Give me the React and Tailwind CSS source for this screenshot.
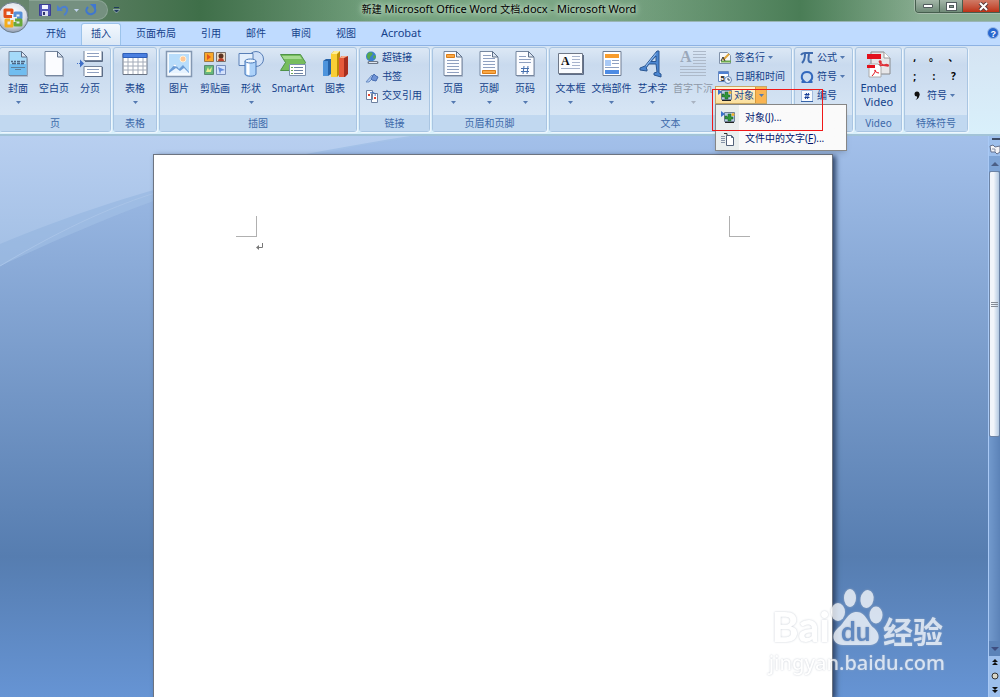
import React, { useState } from "react";

const TABS = ["开始", "插入", "页面布局", "引用", "邮件", "审阅", "视图", "Acrobat"];

const PUNCTUATION = [",", "。", "、", ";", ":", "?"];

function Icon({ children, size = 28 }) {
  return (
    <svg width={size} height={size} viewBox={`0 0 ${size} ${size}`} className="shrink-0 overflow-visible" aria-hidden="true">
      {children}
    </svg>
  );
}

function Sheet({ fill = "#fbfcff", children }) {
  return (
    <Icon>
      <path d="M6 3h12l6 6v18H6z" fill="#8b98ad" opacity=".5" />
      <path d="M5 1.500h12.500l5.500 5.500v18.500H5z" fill={fill} stroke="#75869f" />
      <path d="M17.500 1.500v5.500H23z" fill="#dfe7f3" stroke="#5f7089" />
      {children}
    </Icon>
  );
}

function Lines({ x, y, w, n, step = 3, color = "#8fa0c0" }) {
  return Array.from({ length: n }, (_, i) => (
    <path key={i} d={`M${x} ${y + i * step}.5h${w}`} stroke={color} />
  ));
}

const CoverIcon = () => (
  <Sheet fill="#a5daf9">
    <path d="M5.500 14h17v11h-17z" fill="#70bdf0" />
    <path d="M7 11.500h2m1 0h2m1 0h3m1 0h4M8 13.500h4m1 0h3m1 0h3" stroke="#4d6584" strokeWidth="1.500" />
    <path d="M7 17.500h14M11 19.500h6" stroke="#5f7f9b" />
  </Sheet>
);

const BreakIcon = () => (
  <Icon>
    <path d="M8 1v9.500h18V1M8 26V16.500h18V26" fill="#fff" stroke="#71819a" />
    <path d="M9 11.500h17.500V2M9 26.500h17.500V17" fill="none" stroke="#5c6d87" />
    <Lines x={11} y={3} w={12} n={2} />
    <Lines x={11} y={19} w={12} n={2} />
    <path d="M4 9.500l4 4-4 4z" fill="#3f6fc8" />
    <path d="M1 13.500h3" stroke="#3f6fc8" strokeDasharray="1 1" />
  </Icon>
);

const TableIcon = () => (
  <Icon>
    <path d="M2 3.500h24v21H2z" fill="#fff" stroke="#6a7484" />
    <path d="M2 3.500h24v4H2z" fill="#4a7fe0" stroke="#2e5fba" />
    <path d="M2 12h24M2 16h24M2 20h24M7 8v16M12 8v16M17 8v16M22 8v16" stroke="#a3abb9" />
  </Icon>
);

const PictureIcon = () => (
  <Icon>
    <path d="M1.500 1.500h25v25h-25z" fill="#f4faff" stroke="#8498b2" strokeWidth="1.500" />
    <path d="M4 4h20v19H4z" fill="#b9ddfb" />
    <circle cx="18" cy="9" r="3" fill="#ffc795" stroke="#fff1d8" />
    <path d="M4 21l6-7 4 5 4-4 6 7v1H4z" fill="#6b9cd6" />
    <path d="M4 23l7-5 4 3 4-3 5 5z" fill="#e7f3ff" />
    <path d="M8 16l2-2 2 2.500z" fill="#fff" />
  </Icon>
);

const ClipArtIcon = () => (
  <Icon>
    <path d="M3.500 2.500h9v9h-9z" fill="#f8a92b" stroke="#9b7747" />
    <path d="M6 4l4 3-4 3z" fill="#e5561b" />
    <path d="M15.500 2.500h9v9h-9z" fill="#ead8c3" stroke="#776f6b" />
    <circle cx="20" cy="6" r="2.500" fill="#5b3422" />
    <path d="M17 11c0-4 6-4 6 0z" fill="#bd432b" />
    <path d="M3.500 15.500h9v9h-9z" fill="#65b87a" stroke="#5c8a74" />
    <path d="M5 22l2-5 1 3 3-3-1 5z" fill="#e7ef91" />
    <path d="M15.500 15.500h9v9h-9z" fill="#d4e2fb" stroke="#7990bd" />
    <path d="M17 17l7 3-4 1-1 3z" fill="#648dde" />
  </Icon>
);

const ShapesIcon = () => (
  <Icon>
    <circle cx="19" cy="9" r="7.500" fill="#cfe0f7" stroke="#587fb7" />
    <path d="M2 3.500h14v12H2z" fill="#e3effc" stroke="#587fb7" />
    <path d="M8 11v13c0 3 11 3 11 0V11" fill="#acd2fa" stroke="#4777b8" />
    <path d="M9.500 12v12c1 1 2 1 3 1V12z" fill="#fff" />
    <ellipse cx="13.500" cy="11" rx="5.500" ry="2" fill="#f0f8ff" stroke="#4777b8" />
  </Icon>
);

const SmartArtIcon = () => (
  <Icon>
    <path d="M1.500 4.500h20l5 8-5 8h-20l5-8z" fill="#76bd5d" stroke="#4f9348" />
    <path d="M3 6h18l2 3H5z" fill="#a6da91" />
    <path d="M10.500 14.500h16v11h-16z" fill="#fff" stroke="#7c91ad" />
    <Lines x={15} y={17} w={9} n={3} color="#6c83a5" />
    <path d="M12 17.500h2m-2 3h2m-2 3h2" stroke="#6ba858" />
  </Icon>
);

const ChartIcon = () => (
  <Icon>
    <path d="M2 11l3-2h5v15l-3 2H2z" fill="#2663a9" />
    <path d="M2 11h5v15H2z" fill="#4e94dc" />
    <path d="M10 4l3-3h6v23l-3 3h-6z" fill="#bd8d07" />
    <path d="M10 4h6v23h-6z" fill="#f9cf35" />
    <path d="M10 4l3-3h6l-3 3z" fill="#ffed91" />
    <path d="M18 8l3-2h6v18l-3 3h-6z" fill="#a62e1e" />
    <path d="M18 8h5v19h-5z" fill="#e65a3b" />
    <path d="M18 8l3-2h6l-4 2z" fill="#f8ab8a" />
  </Icon>
);

const HeaderIcon = () => (
  <Sheet>
    <path d="M7.500 4.500h8v3h-8z" fill="#f8a847" stroke="#dc7d17" />
    <Lines x={8} y={10} w={12} n={5} />
  </Sheet>
);

const FooterIcon = () => (
  <Sheet>
    <Lines x={8} y={5} w={8} n={1} />
    <Lines x={8} y={8} w={12} n={4} />
    <path d="M7.500 20.500h13v3h-13z" fill="#f8a847" stroke="#dc7d17" />
  </Sheet>
);

const PageNumberIcon = () => (
  <Sheet>
    <Lines x={8} y={6} w={7} n={1} />
    <Lines x={8} y={9} w={12} n={2} />
    <path d="M13 16l-1 8M17 16l-1 8M10 18.500h8M10 21.500h8" stroke="#4770ae" />
  </Sheet>
);

const TextBoxIcon = () => (
  <Icon>
    <path d="M1.500 3.500h24v20h-24z" fill="#fafcff" stroke="#6e7787" />
    <path d="M2 24.500h24.500V5" fill="none" stroke="#5d6d88" />
    <text x="4" y="15" fontSize="12" fontWeight="700" fontFamily="Liberation Serif, serif" fill="#111">A</text>
    <Lines x={15} y={6} w={8} n={4} color="#a6b3cd" />
    <Lines x={4} y={18} w={19} n={1} color="#a6b3cd" />
  </Icon>
);

const PartsIcon = () => (
  <Icon>
    <path d="M5 1.500h18v24H5z" fill="#fff" stroke="#6e7d94" />
    <path d="M7 4h14v4H7z" fill="#f89c2c" />
    <path d="M7 10h6v6H7z" fill="#a9c9f5" />
    <Lines x={14} y={10} w={7} n={2} />
    <Lines x={7} y={17} w={14} n={1} />
    <path d="M7 20h14v4H7z" fill="#4d8be4" />
  </Icon>
);

const WordArtIcon = () => (
  <Icon>
    <path d="M18 1L6 16l-5 2v2l7 1v-2l-1-1 3-4h7l1 8-3 1v2l7 2v-3l-2-1L20 1zM12 11.500L17 6v5.500z" fill="#4b86d1" stroke="#2b5792" />
    <path d="M17 3.500L7 16" stroke="#9ac2f1" />
  </Icon>
);

const DropCapIcon = () => (
  <Icon>
    <text x="1" y="12" fontSize="16" fontWeight="700" fontFamily="Liberation Serif, serif" fill="#9ba8ba">A</text>
    <Lines x={14} y={1} w={13} n={5} color="#adb9c9" />
    <Lines x={1} y={16} w={26} n={4} color="#adb9c9" />
  </Icon>
);

const PdfIcon = () => (
  <Icon>
    <path d="M6 2h13l6 6v16H6z" fill="#e7e7e9" stroke="#88898c" />
    <path d="M19 2v6h6" fill="#fff" stroke="#999" />
    <path d="M2 4h14v5H2z" fill="#e3101c" />
    <path d="M13 17c3-3 4-6 2-6s1 5 8 5c2-2-5-2-10 1z" fill="none" stroke="#df3137" strokeWidth="1.500" />
    <path d="M4 14h9l3 3v10H4z" fill="#fff" stroke="#aaa" />
    <path d="M2 15h8v3H2z" fill="#e3101c" />
    <path d="M7 26c3-3 4-6 3-6s1 3 4 3" fill="none" stroke="#e3101c" />
  </Icon>
);

const LinkIcon = () => (
  <Icon size={14}>
    <circle cx="6" cy="5.500" r="5" fill="#3c80cf" />
    <path d="M3 2c3-2 6 0 4 2S4 7 5 9C2 8 1 5 3 2zM9 4l2 1-1 3-2-1z" fill="#57a94c" />
    <path d="M4 11.500h4M8 11.500h4" stroke="#6d7889" strokeWidth="3" strokeLinecap="round" />
    <path d="M4 11.500h8" stroke="#dfe6ee" />
  </Icon>
);

const BookmarkIcon = () => (
  <Icon size={14}>
    <path d="M1 12l6-7 2 2-5 5z" fill="#a8c3ed" stroke="#6d8fc4" />
    <path d="M6 9l3-5 2 2 2 1-2 4-4-1z" fill="#6f93d6" stroke="#456bb0" />
  </Icon>
);

const CrossRefIcon = () => (
  <Icon size={14}>
    <path d="M1.500 1.500h6v9h-6zM6.500 4.500h6v9h-6z" fill="#fff" stroke="#6e81a0" />
    <path d="M3 5h2v2H3zM9 8h2v2H9z" fill="#e4412c" />
    <path d="M5 4c4-2 6 1 5 3" fill="none" stroke="#356bc1" />
  </Icon>
);

const SignatureIcon = () => (
  <Icon size={14}>
    <path d="M1.500 1.500h8l3 3v8h-11z" fill="#f7f8fb" stroke="#8091a9" />
    <path d="M3 10.500h10" stroke="#6aa84a" strokeWidth="2" />
    <path d="M5 9l6-6" stroke="#e0a63c" strokeWidth="2" />
    <path d="M3 10l2-4 2 4" fill="none" stroke="#333" />
  </Icon>
);

const DateIcon = () => (
  <Icon size={14}>
    <path d="M.5 1.500h10v10H.5z" fill="#fff" stroke="#6588c1" />
    <path d="M1 2h9v2H1z" fill="#4f80d2" />
    <text x="2.500" y="10.500" fontSize="8" fontWeight="700" fontFamily="Liberation Sans, sans-serif" fill="#222">5</text>
    <circle cx="10" cy="10" r="3.500" fill="#eef5ff" stroke="#6787b5" />
    <path d="M10 8v2h2" fill="none" stroke="#345" />
  </Icon>
);

const ObjectIcon = () => (
  <Icon size={14}>
    <path d="M3.500 2.500h10v9h-10z" fill="#b7cce3" stroke="#6e8196" />
    <path d="M0 1l4 3-4 3z" fill="#3c72cc" />
    <path d="M7 11V9H4V6h2v1h1V4h3v3h2v2h-2v2z" fill="#2f9639" stroke="#1d5d28" strokeWidth=".5" />
    <circle cx="12" cy="4.500" r="1.500" fill="#f1b32e" />
    <path d="M4 12.500h9" stroke="#222" />
  </Icon>
);

const FileTextIcon = () => (
  <Icon size={14}>
    <path d="M0 4.500h4M0 6.500h4M0 8.500h4M0 10.500h4" stroke="#8794a8" />
    <path d="M3 1.500h3v2" fill="none" stroke="#333" />
    <path d="M5.500 3.500h5l2 2v8h-7z" fill="#fff" stroke="#53627a" />
    <path d="M10.500 3.500v2h2" fill="none" stroke="#53627a" />
  </Icon>
);

const NumberIcon = () => (
  <Icon size={14}>
    <path d="M1.500 1.500h11v11h-11z" fill="#f7faff" stroke="#a3bbdf" />
    <path d="M1 12.500h12" stroke="#3764a8" />
    <path d="M6.500 4l-1 6M8.500 4l-1 6M4.500 5.500h5M4.500 8.500h5" stroke="#173e99" />
  </Icon>
);

const PiIcon = () => (
  <Icon size={14}>
    <path d="M1 4c1-2 2-2 4-2h8M5 3c0 4-1 7-3 9M9 3c-1 6-1 9 3 8" fill="none" stroke="#3d69ad" strokeWidth="2" />
  </Icon>
);

const OmegaIcon = () => (
  <Icon size={14}>
    <path d="M1.500 12H5c-5-3-4-10 2-10s7 7 2 10h3.500" fill="none" stroke="#3268bd" strokeWidth="2" />
  </Icon>
);

const CommaIcon = () => (
  <Icon size={14}>
    <circle cx="7" cy="5" r="2.500" fill="#111" />
    <path d="M9.500 5c0 3-1 5-4 6 2-2 2-3 1-5z" fill="#111" />
  </Icon>
);

function Caret({ muted }) {
  return (
    <svg width="5" height="3" viewBox="0 0 5 3" className="shrink-0" aria-hidden="true">
      <path d="M0 0h5L2.500 3z" fill={muted ? "#a9b3c1" : "#5479b1"} />
    </svg>
  );
}

function BigButton({ icon, label, width = "w-9", menu, muted }) {
  return (
    <button
      type="button"
      disabled={muted}
      className={`flex flex-col items-center gap-[6px] pt-[2px] leading-[14px] whitespace-nowrap ${width} ${muted ? "text-[#8d97a6]" : "text-[#15428b]"}`}
    >
      <span className="flex flex-col items-center gap-[3px]">
        {icon}
        <span>{label}</span>
      </span>
      {menu && <Caret muted={muted} />}
    </button>
  );
}

function SmallButton({ icon, label, menu }) {
  return (
    <button type="button" className="flex h-[19px] items-center gap-[3px] whitespace-nowrap">
      {icon}
      <span>{label}</span>
      {menu && <Caret />}
    </button>
  );
}

function Group({ title, width, pad = "", children }) {
  return (
    <section
      aria-label={title}
      className={`flex shrink-0 flex-col rounded-[3px] border border-[#a9c5e2] bg-linear-to-b from-[#dce8f5] from-0% via-[#c9daee] via-20% to-[#dbe9f7] shadow-[1px_1px_0_#eef6fd] ${width}`}
    >
      <div className={`flex min-h-0 flex-1 ${pad}`}>{children}</div>
      <h2 className="h-4 shrink-0 bg-[#c1d8f0] text-center leading-4 text-[#3e6aaa]">{title}</h2>
    </section>
  );
}

function TitleBar() {
  return (
    <header className="relative flex h-[22px] shrink-0 justify-between border-b border-[#9ab5b5] bg-linear-to-r from-[#6b8a74] via-[#74a37f] via-38% to-[#8aad92]">
      <div className="absolute inset-0 bg-linear-to-r from-[#6d8873] from-0% via-[#3f6f49] via-20% to-transparent to-38%" />
      <div className="absolute inset-0 bg-linear-to-r from-transparent from-60% via-[#4a7d56] via-80% to-transparent to-92%" />
      <div className="relative ml-[29px] flex h-5 w-[79px] items-center gap-[6px] rounded-r-full border border-l-0 border-[#8aa394] bg-[#759080] pl-[10px]">
        <button type="button" aria-label="保存">
          <svg width="12" height="12" viewBox="0 0 12 12">
            <path d="M.5.500h11v11H.500z" fill="#5458b8" stroke="#3a3d94" />
            <path d="M3 1h6v4H3z" fill="#f3f5ff" />
            <path d="M3 7h6v5H3z" fill="#dce0f1" />
            <path d="M4 8h2v3H4z" fill="#31346f" />
          </svg>
        </button>
        <button type="button" aria-label="撤消" className="flex items-center gap-[5px]">
          <svg width="12" height="12" viewBox="0 0 12 12">
            <path d="M3 5c4-4 8-2 7 2-.5 2-1 3-3 4" fill="none" stroke="#4c7fcf" strokeWidth="2" />
            <path d="M0 1v6h6z" fill="#4c7fcf" />
          </svg>
          <svg width="5" height="3" viewBox="0 0 5 3"><path d="M0 0h5L2.500 3z" fill="#c0d3ee" /></svg>
        </button>
        <button type="button" aria-label="重复">
          <svg width="12" height="12" viewBox="0 0 12 12">
            <path d="M3 3c-4 4 0 8 4 7s4-5 2-7" fill="none" stroke="#3f77d0" strokeWidth="2" />
            <path d="M5 0h6v6z" fill="#3f77d0" />
          </svg>
        </button>
      </div>
      <button type="button" aria-label="自定义快速访问工具栏" className="relative ml-[5px] h-5">
        <svg width="7" height="7" viewBox="0 0 7 7">
          <path d="M1 .500h5" stroke="#203c5c" />
          <path d="M0 2.500h7L3.500 6z" fill="#203c5c" stroke="#dce9f5" strokeWidth=".5" />
        </svg>
      </button>
      <h1 className="relative flex-1 text-center text-[11px] leading-[18px] text-black [text-shadow:0_0_5px_#d7ead9,0_0_7px_#d7ead9]">
        <span className="text-[10px]">新建</span> Microsoft Office Word <span className="text-[10px]">文档</span>.docx - Microsoft Word
      </h1>
      <div className="relative ml-[37px] flex h-[13px] overflow-hidden rounded-bl-[4px] border border-t-0 border-[#465e4e] shadow-[0_0_0_1px_#a5bbaa]">
        <button type="button" aria-label="最小化" className="flex w-6 items-center justify-center border-r border-[#465e4e] bg-linear-to-b from-[#a3b6a8] to-[#708b78]">
          <svg width="12" height="6" viewBox="0 0 12 6"><path d="M1.500 1.500h9v3h-9z" fill="#fff" stroke="#515b5d" /></svg>
        </button>
        <button type="button" aria-label="最大化" className="flex w-[23px] items-center justify-center border-r border-[#465e4e] bg-linear-to-b from-[#a3b6a8] to-[#708b78]">
          <svg width="11" height="9" viewBox="0 0 11 9"><path d="M2 2h7v5H2z" fill="none" stroke="#515b5d" strokeWidth="4" /><path d="M2 2h7v5H2z" fill="none" stroke="#fff" strokeWidth="2" /></svg>
        </button>
        <button type="button" aria-label="关闭" className="flex w-9 items-center justify-center bg-linear-to-b from-[#cf7a66] to-[#bd3013] pl-1">
          <svg width="11" height="9" viewBox="0 0 11 9"><path d="M2 1l7 7M9 1L2 8" stroke="#593a3a" strokeWidth="4" /><path d="M2 1l7 7M9 1L2 8" stroke="#fff" strokeWidth="2" /></svg>
        </button>
      </div>
    </header>
  );
}

function OfficeButton() {
  return (
    <button type="button" aria-label="Office 按钮" className="absolute top-[1px] -left-[3px] z-10">
      <svg width="32" height="33" viewBox="0 0 32 33">
        <defs>
          <radialGradient id="orb" cx=".5" cy=".35" r=".65">
            <stop offset="0" stopColor="#fff" />
            <stop offset=".65" stopColor="#dbe0e9" />
            <stop offset="1" stopColor="#8f9bb0" />
          </radialGradient>
        </defs>
        <circle cx="16" cy="16.500" r="15" fill="url(#orb)" stroke="#6b7c8a" />
        <g fill="none" strokeWidth="3" strokeLinejoin="round">
          <path d="M15 15.500H8V9h7v4" stroke="#e2501b" />
          <path d="M18 16v-4h6v5h-4" stroke="#5791d9" />
          <path d="M15 19v6H9v-6h4" stroke="#f4ac1c" />
          <path d="M18 19h6v5h-6v-3" stroke="#68a83a" />
        </g>
      </svg>
    </button>
  );
}

function ObjectMenu() {
  return (
    <ul role="menu" className="absolute top-full -left-px z-20 mt-px w-[132px] border border-[#868686] bg-linear-to-r from-[#e9eeee] from-[23px] to-[#fafafa] to-[23px] py-px text-[#00156e] shadow-md">
      <li role="none">
        <button type="button" role="menuitem" className="flex h-[22px] w-full items-center gap-[10px] pl-[5px]">
          <ObjectIcon />
          <span>对象(<u>J</u>)...</span>
        </button>
      </li>
      <li role="none">
        <button type="button" role="menuitem" className="flex h-[21px] w-full items-center gap-[10px] pl-[5px]">
          <FileTextIcon />
          <span>文件中的文字(<u>F</u>)...</span>
        </button>
      </li>
    </ul>
  );
}

function Ribbon() {
  const [menuOpen, setMenuOpen] = useState(true);

  return (
    <div className="-ml-px flex h-[91px] shrink-0 gap-[2px] border-t border-b-2 border-t-[#8db2e3] border-b-[#a3c4d8] bg-linear-to-b from-[#d5e4f3] to-[#d9f0fb] pt-px pb-[2px]">
      <Group title="页" width="w-28">
        <BigButton icon={<CoverIcon />} label="封面" menu />
        <BigButton icon={<Sheet />} label="空白页" />
        <BigButton icon={<BreakIcon />} label="分页" />
      </Group>
      <Group title="表格" width="w-11" pad="justify-center">
        <BigButton icon={<TableIcon />} label="表格" menu />
      </Group>
      <Group title="插图" width="w-[198px]" pad="pl-px">
        <BigButton icon={<PictureIcon />} label="图片" />
        <BigButton icon={<ClipArtIcon />} label="剪贴画" />
        <BigButton icon={<ShapesIcon />} label="形状" menu />
        <BigButton icon={<SmartArtIcon />} label="SmartArt" width="w-12" />
        <BigButton icon={<ChartIcon />} label="图表" />
      </Group>
      <Group title="链接" width="w-[71px]" pad="flex-col items-start pl-[5px]">
        <SmallButton icon={<LinkIcon />} label="超链接" />
        <SmallButton icon={<BookmarkIcon />} label="书签" />
        <SmallButton icon={<CrossRefIcon />} label="交叉引用" />
      </Group>
      <Group title="页眉和页脚" width="w-[115px]" pad="pl-[2px]">
        <BigButton icon={<HeaderIcon />} label="页眉" menu />
        <BigButton icon={<FooterIcon />} label="页脚" menu />
        <BigButton icon={<PageNumberIcon />} label="页码" menu />
      </Group>
      <Group title="文本" width="w-[243px]">
        <BigButton icon={<TextBoxIcon />} label="文本框" width="w-[41px]" menu />
        <BigButton icon={<PartsIcon />} label="文档部件" width="w-[41px]" menu />
        <BigButton icon={<WordArtIcon />} label="艺术字" width="w-[41px]" menu />
        <BigButton icon={<DropCapIcon />} label="首字下沉" width="w-10" menu muted />
        <div className="flex flex-col items-start">
          <div className="pl-[5px]">
            <SmallButton icon={<SignatureIcon />} label="签名行" menu />
            <SmallButton icon={<DateIcon />} label="日期和时间" />
          </div>
          <div className="relative ml-[2px] flex h-[18px] border border-[#c7a763] bg-linear-to-b from-[#fdf3d5] to-[#fbdf9b]">
            <button type="button" className="flex items-center gap-[2px] pl-[2px]">
              <ObjectIcon />
              <span>对象</span>
            </button>
            <button
              type="button"
              aria-label="对象菜单"
              aria-expanded={menuOpen}
              onClick={() => setMenuOpen(!menuOpen)}
              className="ml-px flex w-[11px] items-center justify-center border-l border-[#d99a3a] bg-[#f9b452]"
            >
              <Caret />
            </button>
            {menuOpen && <ObjectMenu />}
            <div className="pointer-events-none absolute top-[2px] -left-1 z-30 h-[42px] w-[111px] border border-[#f01818]" />
          </div>
        </div>
      </Group>
      <Group title="符号" width="w-[59px]" pad="flex-col items-start pl-[5px]">
        <SmallButton icon={<PiIcon />} label="公式" menu />
        <SmallButton icon={<OmegaIcon />} label="符号" menu />
        <SmallButton icon={<NumberIcon />} label="编号" />
      </Group>
      <Group title="Video" width="w-[47px]" pad="justify-center">
        <BigButton icon={<PdfIcon />} label={<span className="text-[11px]">Embed<br />Video</span>} />
      </Group>
      <Group title="特殊符号" width="w-16" pad="flex-col">
        <div className="grid h-[38px] grid-cols-3 pr-1 text-black">
          {PUNCTUATION.map((mark) => (
            <button key={mark} type="button" className="leading-[19px] font-bold">{mark}</button>
          ))}
        </div>
        <div className="pl-[5px]">
          <SmallButton icon={<CommaIcon />} label="符号" menu />
        </div>
      </Group>
    </div>
  );
}

function Scrollbar() {
  return (
    <aside className="relative flex w-3 shrink-0 flex-col border-l border-[#a9c9f5] bg-[#9dbfec]">
      <div className="flex h-5 flex-col items-end gap-1 pt-[2px]">
        <div className="h-[2px] w-2 bg-[#3d4c66]" />
        <svg width="11" height="11" viewBox="0 0 11 11">
          <path d="M1 2l3-1 2 2 5-1v6L8 10 6 8H2z" fill="#f4f4f7" stroke="#64718c" />
          <path d="M3 5h3v3" fill="none" stroke="#8790a5" />
        </svg>
      </div>
      <button type="button" aria-label="向上滚动" className="flex h-[15px] items-center justify-center bg-[#7ea4d6]">
        <svg width="8" height="4" viewBox="0 0 8 4"><path d="M0 4l4-4 4 4z" fill="#4b5f86" /></svg>
      </button>
      <div className="flex flex-1 flex-col bg-linear-to-r from-[#7299cc] to-[#5c83b8]">
        <div className="flex h-[266px] flex-col items-center justify-center gap-px rounded-[2px] border border-[#6c83a5] bg-linear-to-r from-[#f2f5fa] from-40% to-[#b3c9e2]">
          <i className="h-px w-[7px] bg-[#848b96]" />
          <i className="h-px w-[7px] bg-[#848b96]" />
          <i className="h-px w-[7px] bg-[#848b96]" />
        </div>
      </div>
      <button type="button" aria-label="向下滚动" className="flex h-[15px] items-center justify-center bg-[#5c83b8]">
        <svg width="8" height="4" viewBox="0 0 8 4"><path d="M0 0h8L4 4z" fill="#3e4e80" /></svg>
      </button>
      <div className="flex h-[41px] flex-col items-center justify-around">
        <button type="button" aria-label="前一页">
          <svg width="6" height="7" viewBox="0 0 6 7"><path d="M3 0l3 3H0zM3 3l3 3H0z" fill="#111" /></svg>
        </button>
        <button type="button" aria-label="选择浏览对象">
          <svg width="8" height="8" viewBox="0 0 8 8"><circle cx="4" cy="4" r="3" fill="#d8d5c8" stroke="#333" /></svg>
        </button>
        <button type="button" aria-label="下一页">
          <svg width="6" height="7" viewBox="0 0 6 7"><path d="M0 0h6L3 3zM0 3h6L3 6z" fill="#111" /></svg>
        </button>
      </div>
    </aside>
  );
}

function Watermark() {
  return (
    <div className="pointer-events-none absolute right-[55px] bottom-[21px] flex flex-col items-end text-white opacity-75 [text-shadow:0_0_2px_#a9b2bf]">
      <div className="flex items-end pr-[2px]">
        <span className="mb-[5px] font-['Lato'] text-[41px] leading-[36px] font-black">Bai</span>
        <svg width="53" height="58" viewBox="0 0 53 58" fill="#fff" className="mb-[4px] drop-shadow-[0_0_1px_#a9b2bf]">
          <ellipse cx="8" cy="24" rx="7" ry="9" />
          <ellipse cx="20" cy="10" rx="6" ry="9" />
          <ellipse cx="37" cy="11" rx="6.500" ry="9" transform="rotate(10 37 11)" />
          <ellipse cx="46" cy="27" rx="6.500" ry="8.500" />
          <path d="M27 24c9 0 11 12 17 16 8 7 5 17-4 17H13c-10 0-13-10-5-17 7-5 9-16 19-16z" />
          <text x="11" y="53" fontSize="26" fontWeight="700" fontFamily="Lato, sans-serif" fill="#6389bf">du</text>
        </svg>
        <span className="text-[30px] leading-[36px] font-bold">经验</span>
      </div>
      <span className="text-[20px] leading-[26px] font-medium">jingyan.baidu.com</span>
    </div>
  );
}

function Workspace() {
  return (
    <main className="relative flex min-h-0 flex-1 overflow-hidden bg-linear-to-b from-[#a3c0ea] from-0% via-[#567db0] via-75% to-[#6694d4]">
      <svg className="absolute top-0 left-0" width="430" height="140" viewBox="0 0 430 140" aria-hidden="true">
        <defs>
          <linearGradient id="sky" x1="0" y1="0" x2="0" y2="1">
            <stop offset="0" stopColor="#b8cff0" />
            <stop offset="1" stopColor="#a5c1e6" />
          </linearGradient>
        </defs>
        <path d="M0 0h425C260 22 150 60 0 130z" fill="#a5c3e8" opacity=".5" />
        <path d="M0 0h410C250 25 130 54 0 108z" fill="url(#sky)" />
        <path d="M0 130C70 88 120 68 155 57" fill="none" stroke="#a9c4e8" />
      </svg>
      <div className="relative min-w-0 flex-1 overflow-hidden pt-[18px] pr-[2px]">
        <article className="mx-auto h-full w-full max-w-[680px] border border-b-0 border-[#6d7480] bg-white px-[82px] pt-[61px] shadow-[3px_2px_5px_#30466b]">
          <div className="flex justify-between">
            <div className="h-[21px] w-[21px] border-r border-b border-[#b0b0b0]" />
            <div className="h-[21px] w-[21px] border-b border-l border-[#b0b0b0]" />
          </div>
          <p className="pt-[5px] pl-5">
            <svg width="8" height="9" viewBox="0 0 8 9" aria-hidden="true">
              <path d="M6.500 1v4.500H2" fill="none" stroke="#777" />
              <path d="M0 5.500l3-2.500v5z" fill="#777" />
            </svg>
          </p>
        </article>
      </div>
      <Scrollbar />
      <Watermark />
    </main>
  );
}

export default function App() {
  const [activeTab, setActiveTab] = useState("插入");

  return (
    <div className="relative flex h-screen flex-col overflow-hidden font-['Noto_Sans','Noto_Sans_CJK_SC',sans-serif] text-[10px] text-[#15428b]">
      <TitleBar />
      <OfficeButton />
      <nav className="flex h-[23px] shrink-0 items-end justify-between bg-[#bfdbff]">
        <div role="tablist" className="flex items-end gap-[5px] pl-9">
          {TABS.map((tab) => (
            <button
              key={tab}
              type="button"
              role="tab"
              aria-selected={activeTab === tab}
              onClick={() => setActiveTab(tab)}
              className={`h-[22px] rounded-t-[3px] border border-b-0 px-[9px] pb-[3px] leading-4 ${
                activeTab === tab ? "border-[#9cc3ea] bg-linear-to-b from-[#f2f8fe] to-[#dbe8f6]" : "border-transparent"
              } ${tab === "Acrobat" ? "text-[11px]" : ""}`}
            >
              {tab}
            </button>
          ))}
        </div>
        <button type="button" aria-label="帮助" className="mb-[6px] mr-px">
          <svg width="12" height="12" viewBox="0 0 12 12">
            <circle cx="6" cy="6" r="5.500" fill="#2867cf" stroke="#9ebce6" />
            <text x="3.500" y="9.500" fontSize="9" fontWeight="700" fontFamily="Liberation Sans, sans-serif" fill="#fff">?</text>
          </svg>
        </button>
      </nav>
      <Ribbon />
      <Workspace />
    </div>
  );
}
